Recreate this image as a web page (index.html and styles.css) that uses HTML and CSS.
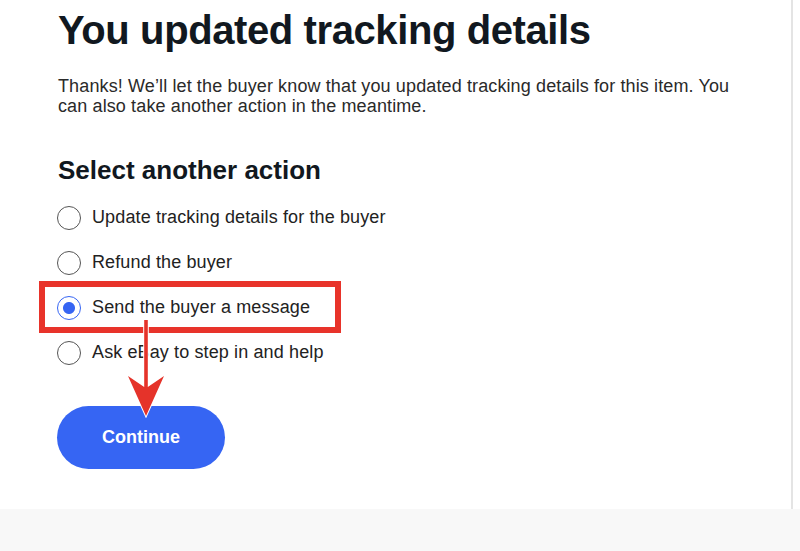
FILE: index.html
```html
<!DOCTYPE html>
<html lang="en">
<head>
  <meta charset="UTF-8" />
  <meta name="viewport" content="width=device-width, initial-scale=1.0"/>
  <title>You updated tracking details</title>
  <link rel="stylesheet" href="styles.css">
</head>
<body>
  <div class="page">
    <h1>You updated tracking details</h1>
    <p class="intro">Thanks! We’ll let the buyer know that you updated tracking details for this item. You can also take another action in the meantime.</p>

    <h2>Select another action</h2>
    <form class="actions">
      <label class="option"><input type="radio" name="action" value="update" /> Update tracking details for the buyer</label>
      <label class="option"><input type="radio" name="action" value="refund" /> Refund the buyer</label>
      <label class="option marked"><input type="radio" name="action" value="message" checked /> Send the buyer a message</label>
      <label class="option"><input type="radio" name="action" value="help" /> Ask eBay to step in and help</label>
      <button type="submit" class="btn-continue">Continue</button>
    </form>

    <!-- annotation arrow -->
    <svg class="arrow" width="40" height="100" viewBox="0 0 40 100">
      <path d="M18.2 2 H21.8 V69 L38 58 L20 98 L2 58 L18.2 69 Z" fill="#e5332a" stroke="#fff" stroke-width="2" stroke-linejoin="miter" paint-order="stroke"/>
    </svg>
  </div>
  <div class="band"></div>
</body>
</html>
```

FILE: styles.css
```css
body { margin: 0; background: #fff; font-family: 'Liberation Sans', Arial, sans-serif; color: #222; }
.page { position: relative; width: 793px; height: 509px; box-sizing: border-box; padding: 6px 0 0 58px; border-right: 2px solid #e4e4e4; }
.band { height: 42px; background: #f8f8f8; }

h1 { margin: 0; font-size: 40px; line-height: 48px; letter-spacing: -0.4px; color: #111820; }
.intro { margin: 22px 0 0; max-width: 690px; font-size: 18px; line-height: 20px; letter-spacing: 0.12px; color: #2a2a2a; }
h2 { margin: 38px 0 0; font-size: 26px; line-height: 32px; color: #111820; }

.actions { margin-top: 9px; }
.option { position: relative; display: flex; align-items: center; gap: 11px; height: 45px; font-size: 18px; letter-spacing: 0.12px; color: #222; width: max-content; }
.option input { appearance: none; margin: 0 0 0 -1px; width: 24px; height: 24px; border: 1.5px solid #555; border-radius: 50%; background: #fff; }
.option input:checked { border-color: #3665f3; background: radial-gradient(circle, #3665f3 0 5.5px, #fff 6.5px); }
.marked::after { content: ""; position: absolute; left: -19px; top: -4px; width: 302px; height: 52px; box-sizing: border-box; border: 6px solid #e8332a; }

.btn-continue { display: block; margin-top: 31px; margin-left: -1px; width: 168px; height: 63px; border: none; border-radius: 32px; background: #3665f3; color: #fff; font-family: inherit; font-size: 18px; font-weight: bold; cursor: pointer; }

.arrow { position: absolute; left: 126px; top: 318px; }
```
